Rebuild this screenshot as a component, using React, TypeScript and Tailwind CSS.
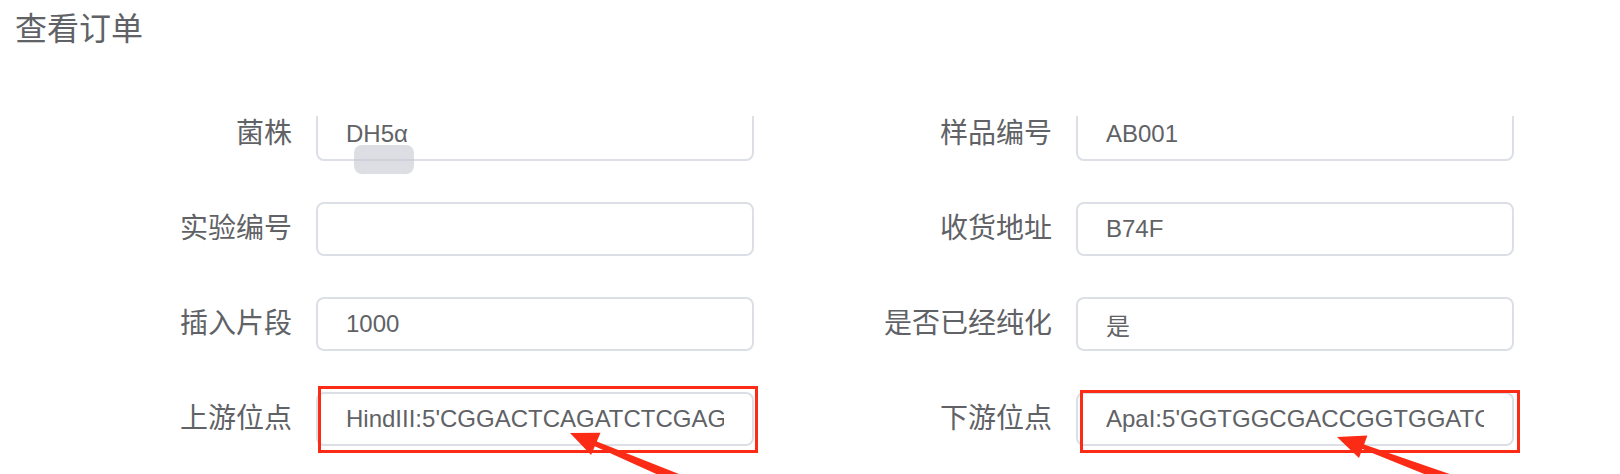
import React from "react";

type Field = {
  label: string;
  value: string;
  marked?: "left" | "right";
};

const fields: Field[] = [
  { label: "菌株", value: "DH5α" },
  { label: "样品编号", value: "AB001" },
  { label: "实验编号", value: "" },
  { label: "收货地址", value: "B74F" },
  { label: "插入片段", value: "1000" },
  { label: "是否已经纯化", value: "是" },
  {
    label: "上游位点",
    value: "HindIII:5'CGGACTCAGATCTCGAGCTCAAGCTT3'",
    marked: "left",
  },
  {
    label: "下游位点",
    value: "ApaI:5'GGTGGCGACCGGTGGATCCGGGCCC3'",
    marked: "right",
  },
];

const FormRow = ({ field, idx }: { field: Field; idx: number }) => {
  return (
    <div className="flex h-[54px] items-center">
      <label className="w-[292px] text-right text-[28px] leading-none text-[#606266]">
        {field.label}
      </label>
      <div className="relative ml-[24px]">
        <input
          readOnly
          value={field.value}
          className="h-[54px] w-[438px] rounded-[8px] border-2 border-[#dcdfe6] bg-white px-[28px] text-[24px] text-[#606266] focus:outline-none"
        />
        {/* grey drag handle sitting over the first field */}
        {idx === 0 && (
          <div className="absolute top-[38px] left-[38px] h-[29px] w-[60px] rounded-[8px] bg-[#c4c8d0]/60" />
        )}
        {field.marked === "left" && (
          <div className="absolute top-[-6px] left-[2px] h-[67px] w-[440px] border-[3px] border-[#fb2b16]" />
        )}
        {field.marked === "right" && (
          <div className="absolute top-[-2px] left-[4px] h-[63px] w-[440px] border-[3px] border-[#fb2b16]" />
        )}
      </div>
    </div>
  );
};

export default function App() {
  return (
    <div className="relative h-[474px] w-[1620px] overflow-hidden bg-white font-['Liberation_Sans','Noto_Sans_CJK_SC',sans-serif]">
      <h1 className="pt-[13px] pl-[15px] text-[32px] leading-[32px] font-normal text-[#606266]">
        查看订单
      </h1>

      <div className="mt-[71px] h-[358px] overflow-hidden">
        <div className="-mt-[9px] grid w-[1520px] grid-cols-2 gap-y-[41px]">
          {fields.map((field, idx) => (
            <FormRow key={field.label} field={field} idx={idx} />
          ))}
        </div>
      </div>

      {/* annotation arrows */}
      <svg
        className="pointer-events-none absolute top-0 left-0"
        width="1620"
        height="474"
        viewBox="0 0 1620 474"
      >
        <polygon
          fill="#fb2b16"
          points="570,433 600.5,432.8 596.8,441.6 691.6,479 687.8,488.2 594.8,446.2 591.1,455"
        />
        <polygon
          fill="#fb2b16"
          points="1337,437 1367.4,435.6 1364.1,444.5 1460.6,477.8 1457.1,487.2 1362.3,449.1 1359,458"
        />
      </svg>
    </div>
  );
}
